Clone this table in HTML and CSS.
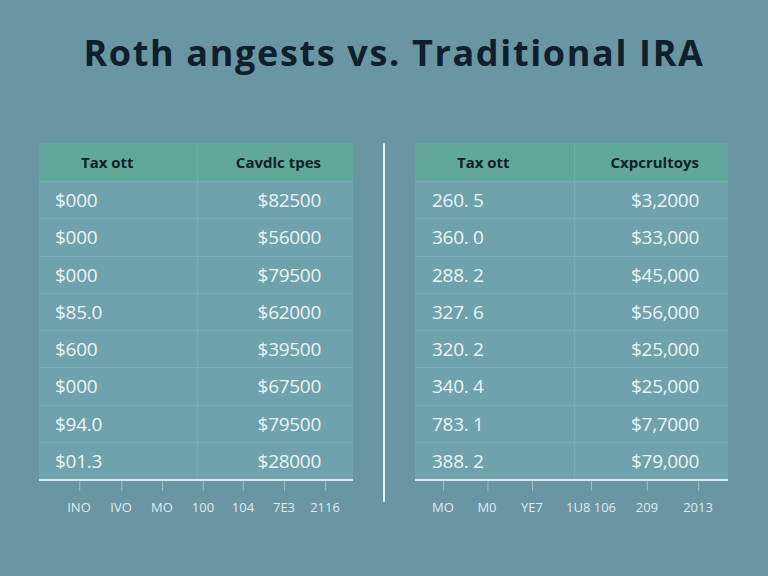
FILE: index.html
```html
<!DOCTYPE html>
<html>
<head>
<meta charset="utf-8">
<link rel="stylesheet" href="styles.css">
</head>
<body>
<main class="page">
  <h1 class="title">Roth angests vs. Traditional IRA</h1>
  <div class="charts">
    <section class="panel">
      <div class="table">
        <div class="row head"><div class="c1">Tax ott</div><div class="c2">Cavdlc tpes</div></div>
        <div class="row"><div class="c1">$000</div><div class="c2">$82500</div></div>
        <div class="row"><div class="c1">$000</div><div class="c2">$56000</div></div>
        <div class="row"><div class="c1">$000</div><div class="c2">$79500</div></div>
        <div class="row"><div class="c1">$85.0</div><div class="c2">$62000</div></div>
        <div class="row"><div class="c1">$600</div><div class="c2">$39500</div></div>
        <div class="row"><div class="c1">$000</div><div class="c2">$67500</div></div>
        <div class="row"><div class="c1">$94.0</div><div class="c2">$79500</div></div>
        <div class="row"><div class="c1">$01.3</div><div class="c2">$28000</div></div>
      </div>
      <div class="axis left-axis">
        <span>INO</span><span>IVO</span><span>MO</span><span>100</span><span>104</span><span>7E3</span><span>2116</span>
      </div>
    </section>
    <div class="divider"></div>
    <section class="panel">
      <div class="table">
        <div class="row head"><div class="c1">Tax ott</div><div class="c2">Cxpcrultoys</div></div>
        <div class="row"><div class="c1">260. 5</div><div class="c2">$3,2000</div></div>
        <div class="row"><div class="c1">360. 0</div><div class="c2">$33,000</div></div>
        <div class="row"><div class="c1">288. 2</div><div class="c2">$45,000</div></div>
        <div class="row"><div class="c1">327. 6</div><div class="c2">$56,000</div></div>
        <div class="row"><div class="c1">320. 2</div><div class="c2">$25,000</div></div>
        <div class="row"><div class="c1">340. 4</div><div class="c2">$25,000</div></div>
        <div class="row"><div class="c1">783. 1</div><div class="c2">$7,7000</div></div>
        <div class="row"><div class="c1">388. 2</div><div class="c2">$79,000</div></div>
      </div>
      <div class="axis right-axis">
        <span>MO</span><span>M0</span><span>YE7</span><span>1U8 106</span><span>209</span><span>2013</span>
      </div>
    </section>
  </div>
</main>
</body>
</html>
```
FILE: styles.css
```css
html, body {
  margin: 0;
  padding: 0;
}
body {
  width: 768px;
  height: 576px;
  overflow: hidden;
  background: #6a96a4;
  font-family: "Open Sans", "Liberation Sans", sans-serif;
}
.page {
  display: flex;
  flex-direction: column;
  align-items: center;
}
.title {
  margin: 30px 0 0;
  padding-left: 20px;
  height: 113px;
  font-family: "Open Sans", "Liberation Sans", sans-serif;
  font-weight: 700;
  font-size: 36px;
  letter-spacing: 1.65px;
  color: #0f1f2b;
  line-height: 46px;
}
.charts {
  display: flex;
  width: 768px;
  align-items: flex-start;
}
.panel {
  display: flex;
  flex-direction: column;
}
.panel:first-child {
  margin-left: 39px;
  width: 314px;
}
.panel:last-child {
  margin-left: 30px;
  width: 313px;
}
.divider {
  width: 2px;
  height: 359px;
  background: #dff3f5;
  margin-left: 30px;
  border-radius: 1px;
}
.table {
  background: #6fa2ac;
  border-bottom: 2px solid #d8ecef;
}
.row {
  display: grid;
  grid-template-columns: 159px 1fr;
  height: 37.25px;
  border-top: 1px solid rgba(150, 200, 205, 0.3);
  box-sizing: border-box;
  align-items: center;
  font-size: 19px;
  color: #eaf4f5;
  letter-spacing: -0.3px;
}
.panel:last-child .row {
  grid-template-columns: 160px 1fr;
}
.row .c1 {
  padding-left: 16px;
  height: 100%;
  display: flex;
  align-items: center;
  border-right: 1px solid rgba(150, 200, 205, 0.3);
}
.row .c2 {
  text-align: right;
  padding-right: 32px;
}
.panel:last-child .row .c1 {
  padding-left: 17px;
}
.panel:last-child .row .c2 {
  padding-right: 29px;
}
.row.head {
  height: 38px;
  border-top: none;
  background: #62a89a;
  font-size: 15px;
  font-weight: 700;
  color: #10222a;
  letter-spacing: 0;
}
.row.head .c1 {
  padding-left: 42px;
  border-right-color: rgba(120, 190, 175, 0.5);
}
.panel:last-child .row.head .c1 {
  padding-left: 42px;
}
.axis {
  position: relative;
  height: 40px;
  font-size: 13px;
  color: #dcebf0;
}
.axis span {
  position: absolute;
  top: 17px;
  transform: translateX(-50%);
}
.axis span::before {
  content: "";
  position: absolute;
  left: 50%;
  top: -17px;
  width: 1px;
  height: 10px;
  background: rgba(220, 240, 242, 0.45);
}
.left-axis span:nth-child(1) { left: 40px; }
.left-axis span:nth-child(2) { left: 82px; }
.left-axis span:nth-child(3) { left: 123px; }
.left-axis span:nth-child(4) { left: 164px; }
.left-axis span:nth-child(5) { left: 204px; }
.left-axis span:nth-child(6) { left: 245px; }
.left-axis span:nth-child(7) { left: 286px; }
.right-axis span:nth-child(1) { left: 28px; }
.right-axis span:nth-child(2) { left: 72px; }
.right-axis span:nth-child(3) { left: 117px; }
.right-axis span:nth-child(4) { left: 176px; }
.right-axis span:nth-child(5) { left: 232px; }
.right-axis span:nth-child(6) { left: 283px; }
```
